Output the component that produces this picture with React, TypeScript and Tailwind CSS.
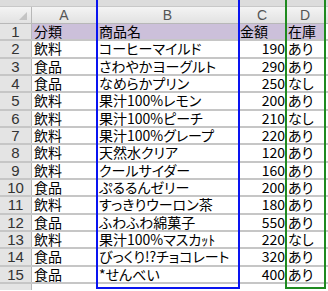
import React from "react";

const rows: [string, string, string, string][] = [
  ["飲料", "コーヒーマイルド", "190", "あり"],
  ["食品", "さわやかヨーグルト", "290", "あり"],
  ["食品", "なめらかプリン", "250", "なし"],
  ["飲料", "果汁100%レモン", "200", "あり"],
  ["飲料", "果汁100%ピーチ", "210", "なし"],
  ["飲料", "果汁100%グレープ", "220", "あり"],
  ["飲料", "天然水クリア", "120", "あり"],
  ["飲料", "クールサイダー", "160", "あり"],
  ["食品", "ぷるるんゼリー", "200", "あり"],
  ["飲料", "すっきりウーロン茶", "180", "あり"],
  ["食品", "ふわふわ綿菓子", "550", "あり"],
  ["飲料", "果汁100%マスカｯﾄ", "220", "なし"],
  ["食品", "びっくり!?チョコレート", "320", "あり"],
  ["食品", "*せんべい", "400", "あり"],
];

const jp = { fontFamily: '"Noto Sans CJK JP", "Noto Sans", sans-serif' };
const latin = { fontFamily: '"Liberation Sans", Arial, sans-serif' };

const cols = "grid grid-cols-[32px_65px_142px_47px_39px_1fr]";

export default function App() {
  return (
    <div className="relative w-[328px] h-[291px] overflow-hidden bg-white [font-feature-settings:'palt']" style={jp}>
      <div className="h-[7px] bg-[#dcdcdc] border-b border-[#c8c8c8]" />
      <div className={`${cols} h-[17px] bg-gradient-to-b from-[#f4f4f4] to-[#e2e2e2] border-b border-[#b8b8b8] text-[14px] text-[#555] leading-[16px]`} style={latin}>
        <div className="relative border-r border-[#b8b8b8]">
          <div className="absolute right-[4px] bottom-[3px] w-0 h-0 border-l-[8px] border-l-transparent border-b-[8px] border-b-[#c4c4c4]" />
        </div>
        <div className="text-center border-r border-[#c8c8c8]">A</div>
        <div className="text-center border-r border-[#c8c8c8]">B</div>
        <div className="text-center border-r border-[#c8c8c8]">C</div>
        <div className="text-center border-r border-[#c8c8c8]">D</div>
        <div />
      </div>
      <div className="flex flex-col">
        <div className={`${cols} h-[17.33px] border-b-2 border-[#c6c6c6] text-[14px] leading-[15px] text-black`}>
          <div className="bg-[#e4e4e4] border-r border-[#b8b8b8] text-center text-[#333] text-[15px]" style={latin}>1</div>
          <div className="bg-[#ccc0da] pl-[2px]">分類</div>
          <div className="bg-[#ccc0da] pl-[2px]">商品名</div>
          <div className="bg-[#ccc0da] pl-[1px]">金額</div>
          <div className="bg-[#ccc0da] pl-[2px]">在庫</div>
          <div />
        </div>
        {rows.map((r, i) => (
          <div key={i} className={`${cols} h-[17.33px] border-b-2 border-[#c6c6c6] text-[14px] leading-[15px] text-black`}>
            <div className="bg-[#e4e4e4] border-r border-[#b8b8b8] text-center text-[#333] text-[15px]" style={latin}>{i + 2}</div>
            <div className="pl-[2px] whitespace-nowrap">{r[0]}</div>
            <div className="pl-[2px] whitespace-nowrap">{r[1]}</div>
            <div className="pr-[1px] text-right">{r[2]}</div>
            <div className="pl-[2px]">{r[3]}</div>
            <div />
          </div>
        ))}
        <div className={`${cols} h-[6px]`}>
          <div className="bg-[#e4e4e4] border-r border-[#b8b8b8]" />
        </div>
      </div>
      <div className="absolute left-[96px] top-0 w-[144px] h-[289px] border-[2.5px] border-t-0 border-[#0a14f0]" />
      <div className="absolute left-[285px] top-0 w-[41px] h-[289px] border-[2.5px] border-t-0 border-[#1f8a1f]" />
    </div>
  );
}
